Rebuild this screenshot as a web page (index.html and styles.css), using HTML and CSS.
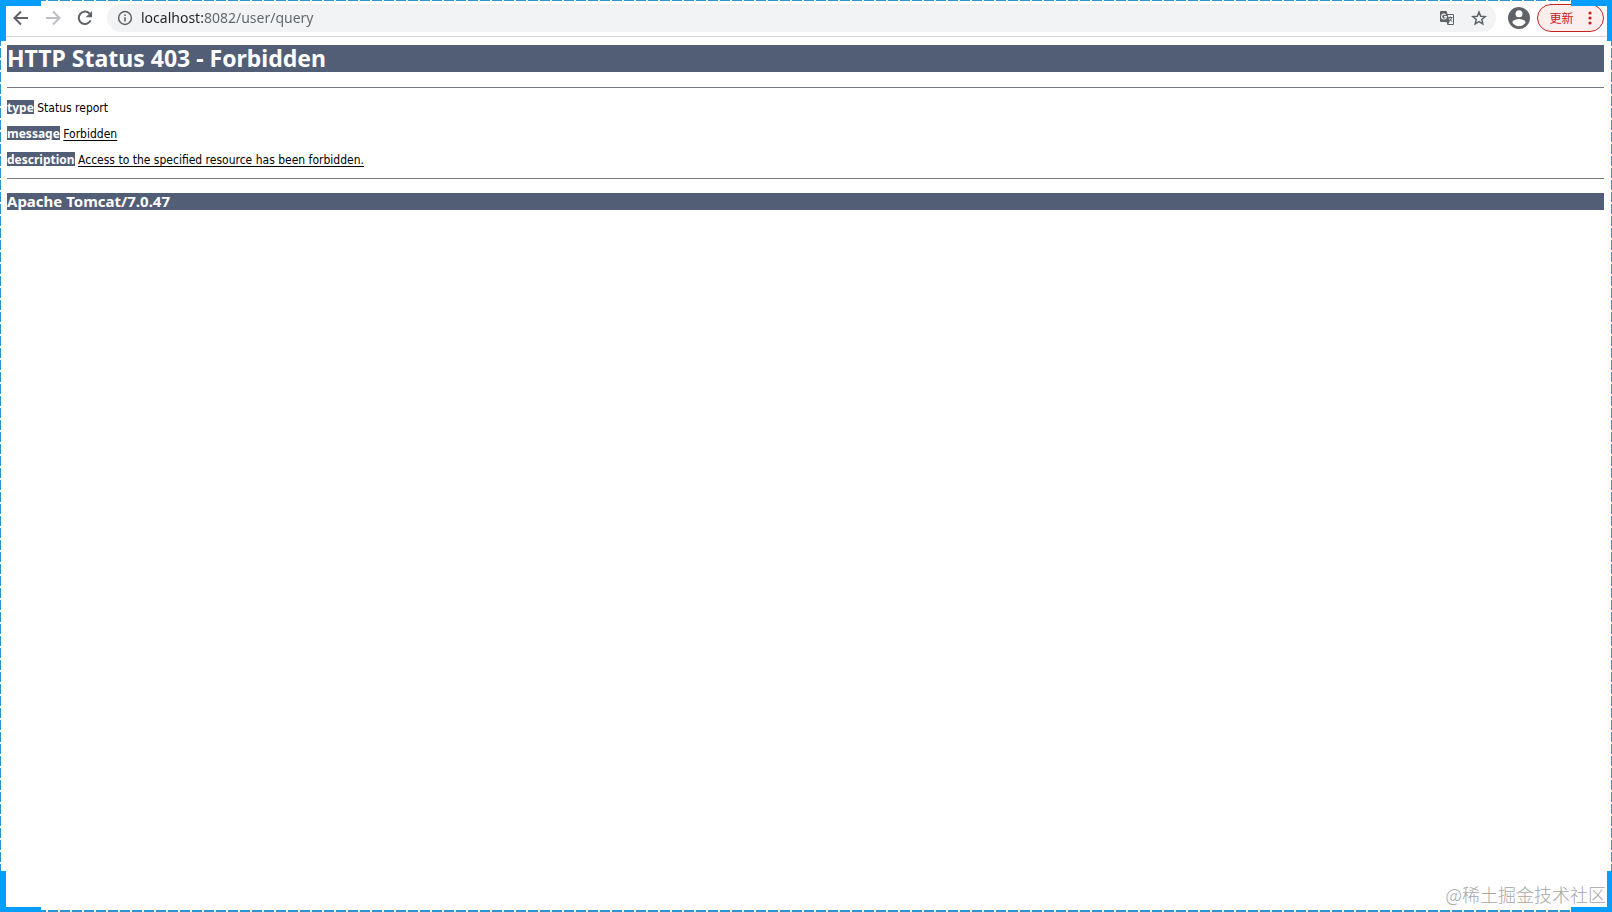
FILE: index.html
```html
<!DOCTYPE html>
<html lang="en">
<head>
<meta charset="utf-8">
<title>HTTP Status 403 - Forbidden</title>
<link rel="stylesheet" href="styles.css">
</head>
<body>
<div class="window">
  <header class="toolbar">
    <button class="tool" type="button" aria-label="Back">
      <svg viewBox="0 0 16 16"><path d="M15 8H2M8 1.5 1.5 8 8 14.5"/></svg>
    </button>
    <button class="tool tool-disabled" type="button" aria-label="Forward" disabled>
      <svg viewBox="0 0 16 16"><path d="M1 8h13M8 1.5 14.5 8 8 14.5"/></svg>
    </button>
    <button class="tool" type="button" aria-label="Reload">
      <svg viewBox="0 0 16 16"><path d="M13.6 10.4A6.2 6.2 0 1 1 12.6 3.7"/><path class="solid" d="M15 1v6.3H8.7z"/></svg>
    </button>
    <div class="omnibox">
      <button class="icon" type="button" aria-label="Site information">
        <svg viewBox="0 0 16 16"><circle class="thin" cx="8" cy="8" r="6.4"/><path class="solid" d="M7.2 7.2h1.6v4.4H7.2zM7.2 4.4h1.6V6H7.2z"/></svg>
      </button>
      <input class="url" type="text" aria-label="Address" value="localhost:8082/user/query" spellcheck="false">
      <button class="icon" type="button" aria-label="Translate this page">
        <svg viewBox="0 0 16 16"><path class="solid" fill-rule="evenodd" d="M2 1h5.5l1 3H14a1 1 0 0 1 1 1v9a1 1 0 0 1-1 1H8.500L7.500 12H2a1 1 0 0 1-1-1V2a1 1 0 0 1 1-1zM8.800 5l2 6.800-1.600 2.200H14V5zM5 3.600a3 3 0 1 0 3 3.400V6H5v1.200h1.700A1.800 1.800 0 1 1 6.200 5.300l.9-.9A3 3 0 0 0 5 3.600z"/><path class="hair" d="M9.500 7.500H13.500M11.500 6.500V7.500M12.700 7.500Q12 10 10.500 11M10.500 8.500 13 11.700"/></svg>
      </button>
      <button class="icon star" type="button" aria-label="Bookmark this page">
        <svg viewBox="0 0 16 16"><path class="thin" d="m8 2 1.700 4.200 4.500.4-3.400 2.900 1 4.400L8 11.600l-3.800 2.300 1-4.400L1.800 6.600l4.500-.4z"/></svg>
      </button>
    </div>
    <button class="avatar" type="button" aria-label="Profile">
      <svg viewBox="0 0 22 22"><path class="solid" fill-rule="evenodd" d="M11 0a11 11 0 1 0 0 22 11 11 0 0 0 0-22zm0 3.300a3.500 3.500 0 1 1 0 7 3.500 3.500 0 0 1 0-7zM4.300 15.500c.1-2.200 4.500-3.400 6.700-3.400s6.600 1.200 6.700 3.400a8 8 0 0 1-13.400 0z"/></svg>
    </button>
    <button class="update" type="button">
      <span>更新</span>
      <svg viewBox="0 0 4 14"><circle cx="2" cy="2" r="1.600"/><circle cx="2" cy="7" r="1.600"/><circle cx="2" cy="12" r="1.600"/></svg>
    </button>
  </header>
  <main class="report">
    <h1>HTTP Status 403 - Forbidden</h1>
    <hr>
    <p><b>type</b> Status report</p>
    <p><b>message</b> <u>Forbidden</u></p>
    <p><b>description</b> <u>Access to the specified resource has been forbidden.</u></p>
    <hr>
    <h3>Apache Tomcat/7.0.47</h3>
  </main>
  <footer class="watermark">@稀土掘金技术社区</footer>
</div>
<div class="frame" aria-hidden="true">
  <i class="corner top left"></i>
  <i class="corner top right"></i>
  <i class="corner bottom left"></i>
  <i class="corner bottom right"></i>
</div>
</body>
</html>
```
FILE: styles.css
```css
* { box-sizing: border-box; }
body {
  margin: 0;
  background: #fff;
  font-family: "Noto Sans", "DejaVu Sans", sans-serif;
  color: #000;
}
.window { min-height: 100vh; display: flex; flex-direction: column; }

.toolbar {
  display: flex;
  align-items: center;
  height: 37px;
  padding: 0 8px 1px 5px;
  border-bottom: 1px solid #d5d9dd;
}
button { border: 0; padding: 0; background: none; display: flex; align-items: center; justify-content: center; color: #5f6368; }
svg { display: block; fill: none; stroke: currentColor; stroke-width: 2; }
.solid { fill: currentColor; stroke: none; }
.thin { stroke-width: 1.5; }
.hair { stroke-width: 1; }
.tool { width: 32px; height: 28px; }
.tool svg { width: 16px; height: 16px; }
.tool-disabled { color: #bdbfc2; }
.omnibox {
  flex: 1;
  display: flex;
  align-items: center;
  height: 28px;
  margin: 0 12px 0 6px;
  padding: 0 9px 0 10px;
  border-radius: 14px;
  background: #f1f3f4;
}
.icon svg { width: 16px; height: 16px; }
.star { margin-left: 16px; }
.url {
  flex: 1;
  min-width: 0;
  height: 28px;
  margin-left: 8px;
  padding: 0;
  border: 0;
  outline: 0;
  font: 14px "Noto Sans", "Open Sans", sans-serif;
  color: transparent;
  background: linear-gradient(to right, #202124 62px, #5f6368 62px);
  -webkit-background-clip: text;
  background-clip: text;
}
.avatar svg { width: 22px; height: 22px; }
.update {
  gap: 14px;
  width: 67px;
  height: 28px;
  margin-left: 7px;
  border: 1px solid #c5221f;
  border-radius: 14px;
  background: #fdeeee;
  color: #c5221f;
  font: 12px "Noto Sans CJK SC", sans-serif;
}
.update svg { width: 4px; height: 14px; fill: currentColor; stroke: none; }

.report { flex: 1; padding: 8px 8px 0 7px; font-size: 12px; line-height: 16px; }
h1, h3, b { background: #525d76; color: #fff; }
h1 { margin: 0 0 15px; font-size: 23px; line-height: 27px; }
h3 { margin: 0; font-size: 15px; line-height: 17px; }
hr { height: 1px; margin: 0; border: 0; background: #757980; }
p {
  margin: 10px 0;
  font-family: "DejaVu Sans Condensed", "DejaVu Sans", sans-serif;
  font-stretch: condensed;
}
hr + p { margin-top: 12px; }
b { display: inline-block; height: 14px; font-family: "Noto Sans", sans-serif; }
hr + h3 { margin-top: 14px; }
u { text-underline-offset: 2px; }

.watermark {
  align-self: flex-end;
  padding: 0 6px 5px;
  font: 300 18px/26px "Noto Sans CJK SC", sans-serif;
  color: #a6a6a6;
}

.frame {
  position: fixed;
  inset: 0;
  pointer-events: none;
  --dash: #2b96cf 0 10px, #fff 10px 12px;
  background:
    repeating-linear-gradient(to right, var(--dash)) top / 100% 1px no-repeat,
    repeating-linear-gradient(to right, var(--dash)) bottom / 100% 2px no-repeat,
    repeating-linear-gradient(to bottom, var(--dash)) left / 1px 100% no-repeat,
    repeating-linear-gradient(to bottom, var(--dash)) right / 1px 100% no-repeat;
}
.corner { position: absolute; width: 41px; height: 41px; border: 0 solid #069dfd; }
.top { top: 0; border-top-width: 6px; }
.bottom { bottom: 0; border-bottom-width: 5px; }
.left { left: 0; border-left-width: 6px; }
.right { right: 0; border-right-width: 5px; }
```
